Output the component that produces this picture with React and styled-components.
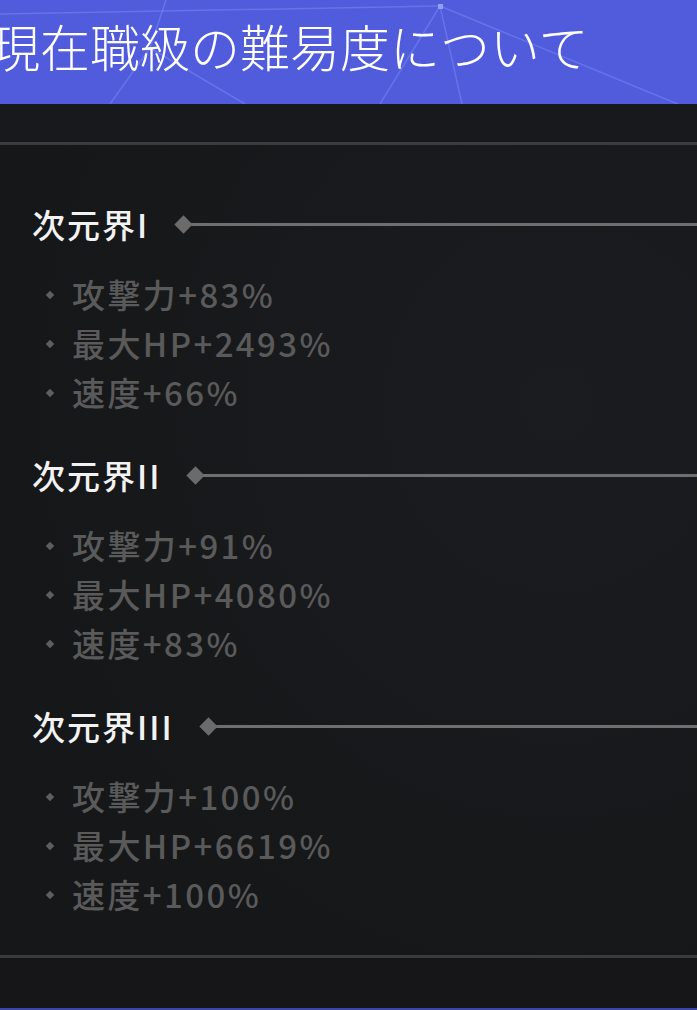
import React from 'react';
import styled, { createGlobalStyle } from 'styled-components';

const levels = [
  { name: '次元界I', stats: ['攻撃力+83%', '最大HP+2493%', '速度+66%'] },
  { name: '次元界II', stats: ['攻撃力+91%', '最大HP+4080%', '速度+83%'] },
  { name: '次元界III', stats: ['攻撃力+100%', '最大HP+6619%', '速度+100%'] },
];

function App() {
  return (
    <Page>
      <GlobalStyle />
      <Header>
        <HeaderLines viewBox="0 0 697 104" preserveAspectRatio="none">
          <line x1="0" y1="14" x2="440" y2="6" />
          <line x1="440" y1="6" x2="697" y2="112" />
          <line x1="440" y1="6" x2="462" y2="104" />
          <line x1="440" y1="6" x2="380" y2="104" />
          <line x1="166" y1="0" x2="150" y2="48" />
          <line x1="150" y1="48" x2="110" y2="104" />
          <line x1="150" y1="48" x2="245" y2="104" />
          <rect x="438" y="4" width="5" height="5" />
        </HeaderLines>
        <Title>現在職級の難易度について</Title>
      </Header>
      <Gap />
      <Divider />
      <Content>
        {levels.map((lv) => (
          <Section key={lv.name}>
            <SectionHead>
              <SectionName>{lv.name}</SectionName>
              <HeadDiamond />
              <HeadLine />
            </SectionHead>
            <StatList>
              {lv.stats.map((s) => (
                <StatRow key={s}>
                  <Bullet />
                  <StatText>{s}</StatText>
                </StatRow>
              ))}
            </StatList>
          </Section>
        ))}
      </Content>
      <Divider />
      <Footer />
    </Page>
  );
}

// ===================== CSS styled-components ===================== //

const GlobalStyle = createGlobalStyle`
  html, body {
    margin: 0;
    padding: 0;
    background: #17181b;
    overflow: hidden;
  }
  body {
    font-family: 'Noto Sans CJK JP', 'Noto Sans', sans-serif;
  }
`;

const Page = styled.div`
  width: 697px;
  height: 1010px;
  display: flex;
  flex-direction: column;
  background: radial-gradient(ellipse at 80% 40%, #1b1c1f 0%, #161719 70%);
  overflow: hidden;
`;

const Header = styled.div`
  position: relative;
  height: 104px;
  background: #515cdd;
  display: flex;
  align-items: center;
  overflow: hidden;
`;

const HeaderLines = styled.svg`
  position: absolute;
  inset: 0;
  width: 100%;
  height: 100%;

  line {
    stroke: #6f86f2;
    stroke-width: 1.5;
    opacity: 0.6;
  }
  rect {
    fill: #8fa0f5;
  }
`;

const Title = styled.h1`
  position: relative;
  margin: 0 0 0 -10px;
  padding-bottom: 14px;
  font-size: 50px;
  font-weight: 300;
  color: #ffffff;
  white-space: nowrap;
`;

const Gap = styled.div`
  height: 38px;
  background: #18191c;
`;

const Divider = styled.div`
  height: 3px;
  background: #3a3b3d;
`;

const Content = styled.div`
  display: flex;
  flex-direction: column;
  gap: 38px;
  padding: 59px 0 36px 32px;
`;

const Section = styled.div`
  display: flex;
  flex-direction: column;
`;

const SectionHead = styled.div`
  height: 40px;
  display: flex;
  align-items: center;
  margin-bottom: 26px;
`;

const SectionName = styled.span`
  font-size: 33px;
  font-weight: 500;
  letter-spacing: 2px;
  color: #f2f2f2;
  line-height: 1;
`;

const HeadDiamond = styled.span`
  width: 13px;
  height: 13px;
  margin-left: 28px;
  background: #6b6b6b;
  transform: rotate(45deg);
  flex-shrink: 0;
`;

const HeadLine = styled.span`
  flex: 1;
  height: 3px;
  background: #6f6f6f;
  margin-left: 1px;
`;

const StatList = styled.div`
  display: flex;
  flex-direction: column;
  padding-left: 15px;
`;

const StatRow = styled.div`
  height: 49px;
  display: flex;
  align-items: center;
`;

const Bullet = styled.span`
  width: 6px;
  height: 6px;
  background: #5e5e5e;
  transform: rotate(45deg);
  margin-right: 19px;
  flex-shrink: 0;
`;

const StatText = styled.span`
  font-size: 33px;
  font-weight: 500;
  color: #5a5a5a;
  line-height: 1;
  letter-spacing: 2.4px;
`;

const Footer = styled.div`
  flex: 1;
  background: linear-gradient(to bottom, #161618 0, #161618 50px, #3d44a8 50px, #3d44a8 53px);
`;

export default App;
